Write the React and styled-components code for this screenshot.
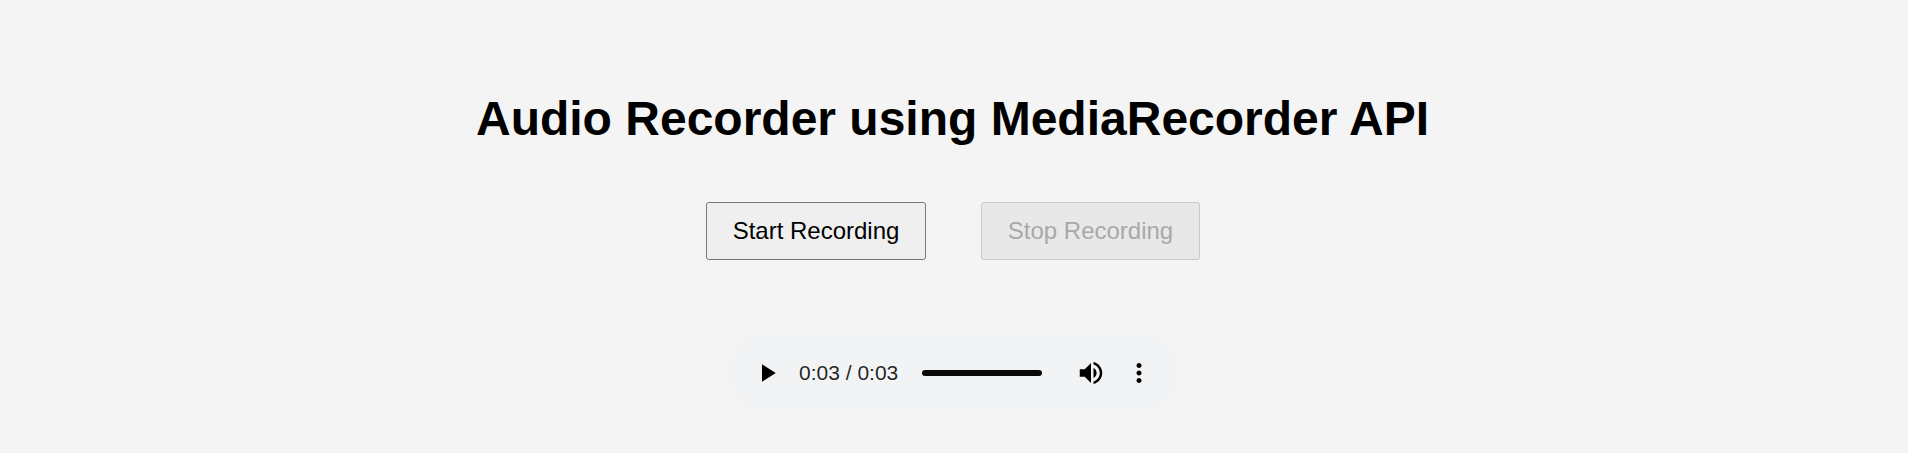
import React from 'react';
import styled, { createGlobalStyle } from 'styled-components';

const GlobalStyle = createGlobalStyle`
  body {
    margin: 0;
    background: #f4f4f4;
    font-family: 'Liberation Sans', Arial, sans-serif;
  }
`;

const Page = styled.main`
  box-sizing: border-box;
  height: 453px;
  padding-top: 91px;
  display: flex;
  flex-direction: column;
  align-items: center;
  overflow: hidden;
`;

const Title = styled.h1`
  margin: 0;
  padding-right: 3px;
  font-size: 48px;
  line-height: 55px;
  font-weight: 700;
  color: #000;
  white-space: nowrap;
`;

const Actions = styled.div`
  display: flex;
  gap: 55px;
  margin-top: 56px;
  padding-right: 2px;
`;

const RecordButton = styled.button`
  box-sizing: border-box;
  width: ${(p) => p.$width}px;
  height: 58px;
  padding: 0;
  border: 1px solid #767676;
  border-radius: 3px;
  background: #efefef;
  color: #000;
  font-family: inherit;
  font-size: 24px;
  white-space: nowrap;

  &:disabled {
    border-color: #c9c9c9;
    background: #e8e8e8;
    color: #a8a8a8;
  }
`;

const Player = styled.section`
  box-sizing: border-box;
  width: 450px;
  height: 81px;
  margin-top: 72px;
  padding: 1px 24px 0 23px;
  display: flex;
  align-items: center;
  border-radius: 41px;
  background: #f1f3f4;
`;

const Icon = styled.svg`
  flex: none;
  display: block;
  width: 30px;
  height: 30px;
  fill: #000;
`;

const Time = styled.span`
  width: 99px;
  margin-left: 17px;
  font-size: 21px;
  line-height: 30px;
  white-space: nowrap;
  color: rgba(0, 0, 0, 0.87);
  text-shadow: 0 0 15px #fff;
`;

const Track = styled.div`
  width: 120px;
  height: 6px;
  margin: 0 34px 0 24px;
  border-radius: 3px;
  background: #0a0a0a;
`;

const MenuIcon = styled(Icon)`
  margin-left: 18px;
`;

export default function App() {
  return (
    <>
      <GlobalStyle />
      <Page>
        <Title>Audio Recorder using MediaRecorder API</Title>
        <Actions>
          <RecordButton $width={220}>Start Recording</RecordButton>
          <RecordButton $width={219} disabled>Stop Recording</RecordButton>
        </Actions>
        <Player>
          <Icon viewBox="0 0 24 24"><path d="M8 5v14l11-7z" /></Icon>
          <Time>0:03 / 0:03</Time>
          <Track />
          <Icon viewBox="0 0 24 24">
            <path d="M3 9v6h4l5 5V4L7 9H3zm13.5 3c0-1.77-1.02-3.29-2.5-4.03v8.05c1.48-.73 2.5-2.25 2.5-4.02zM14 3.23v2.06c2.89.86 5 3.54 5 6.71s-2.11 5.85-5 6.71v2.06c4.01-.91 7-4.49 7-8.77s-2.99-7.86-7-8.77z" />
          </Icon>
          <MenuIcon viewBox="0 0 24 24">
            <path d="M12 8c1.100 0 2-.9 2-2s-.9-2-2-2-2 .9-2 2 .9 2 2 2zm0 2c-1.100 0-2 .9-2 2s.9 2 2 2 2-.9 2-2-.9-2-2-2zm0 6c-1.100 0-2 .9-2 2s.9 2 2 2 2-.9 2-2-.9-2-2-2z" />
          </MenuIcon>
        </Player>
      </Page>
    </>
  );
}
